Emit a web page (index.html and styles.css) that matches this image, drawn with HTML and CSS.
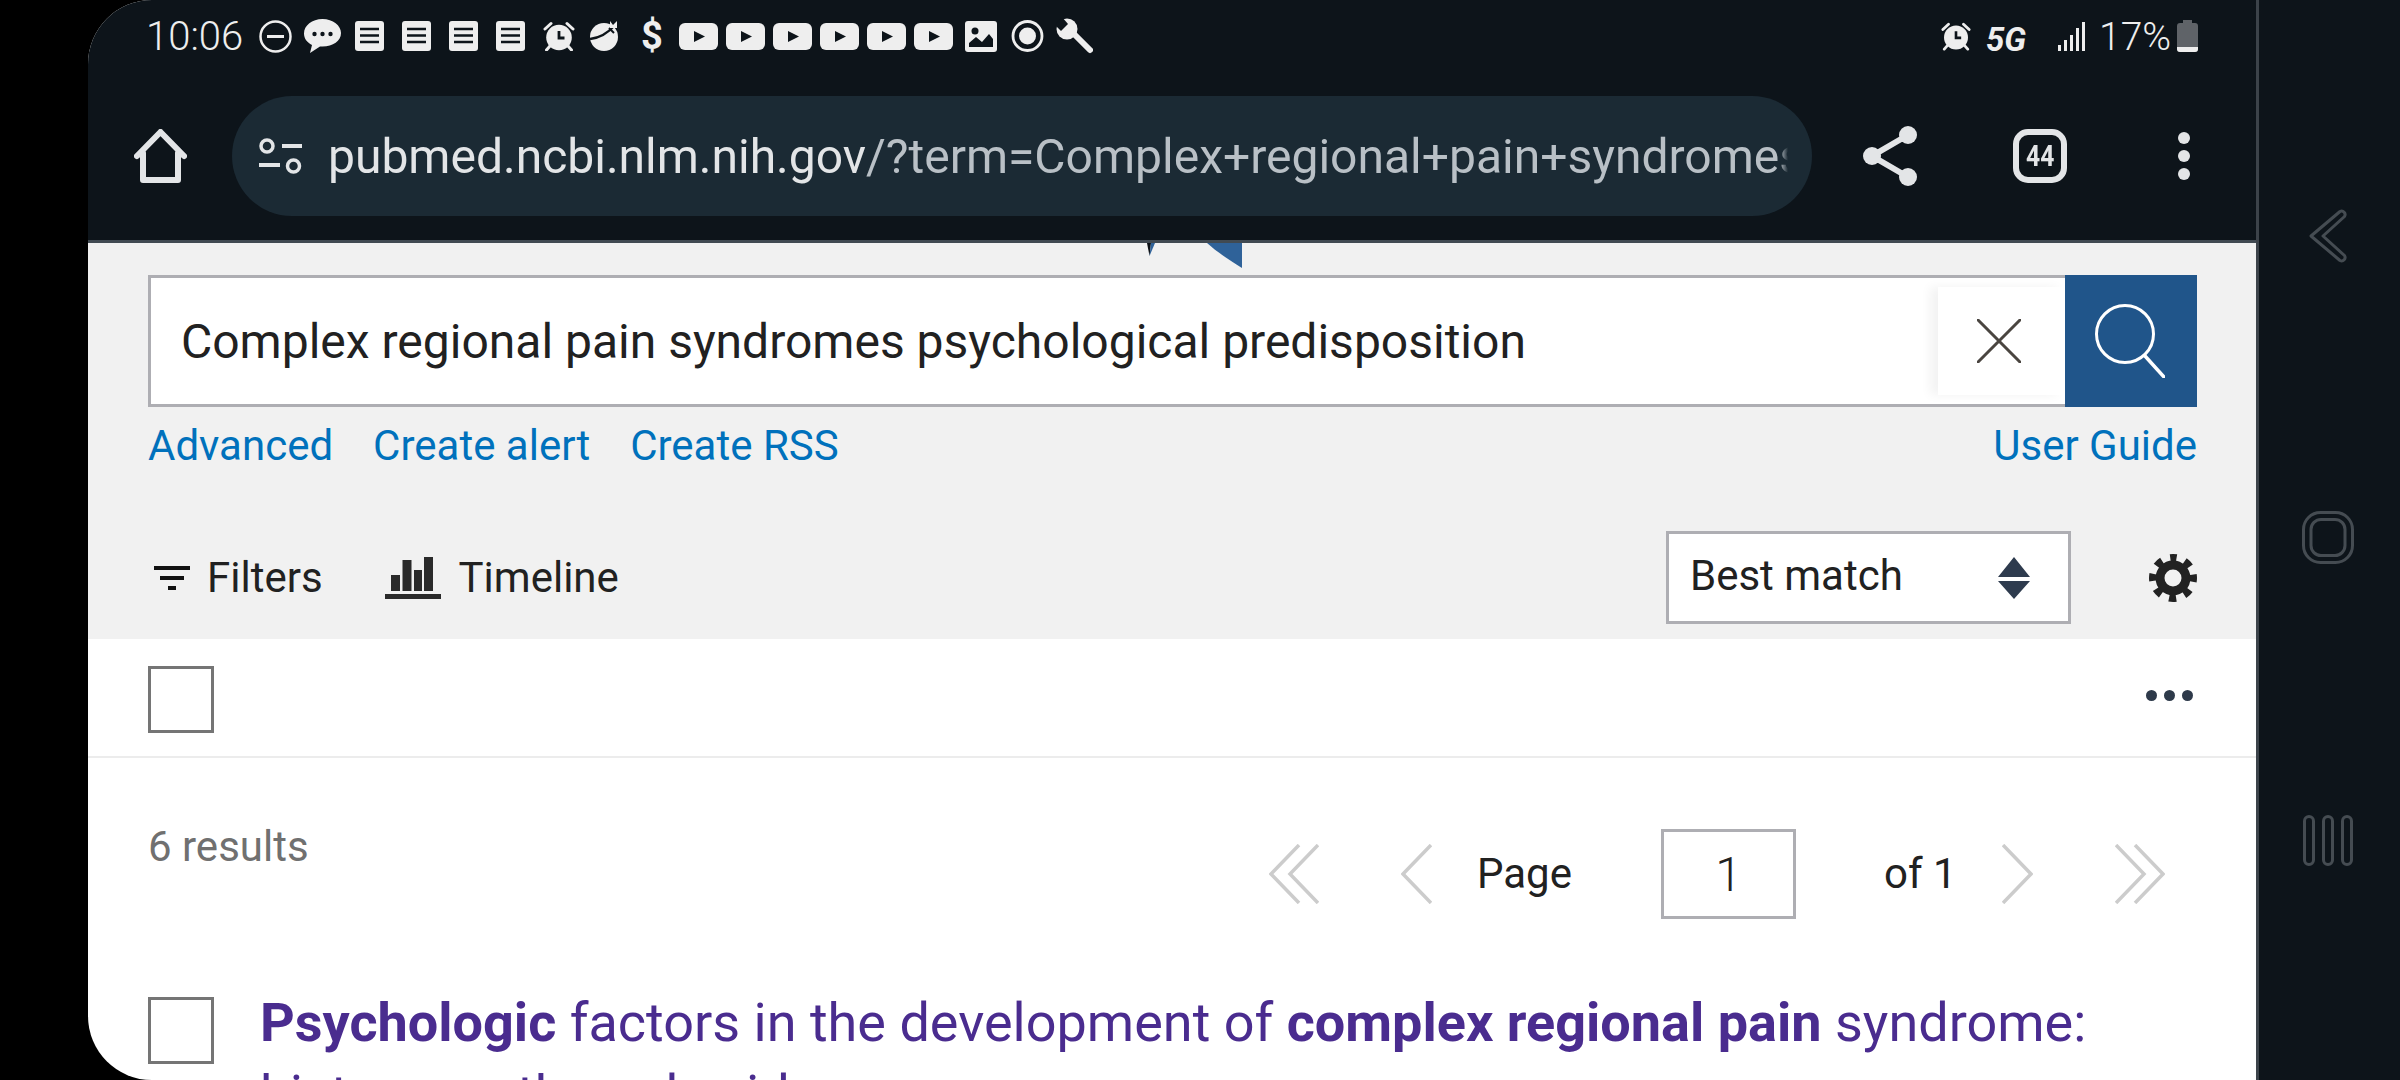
FILE: index.html
```html
<!DOCTYPE html>
<html lang="en">
<head>
<meta charset="utf-8">
<title>PubMed search results</title>
<link rel="stylesheet" href="styles.css">
</head>
<body>
<svg class="defs" width="0" height="0" aria-hidden="true">
  <symbol id="doc" viewBox="0 0 29 30"><rect width="29" height="30" rx="3" fill="#eee"/><path d="M5 8h19M5 14.500h19M5 21h19" stroke="#0d141a" stroke-width="2.500"/></symbol>
  <symbol id="play" viewBox="0 0 39 27"><rect width="39" height="27" rx="6" fill="#eee"/><path d="M15 8l11 5.500-11 5.500z" fill="#0d141a"/></symbol>
  <symbol id="alarm" viewBox="0 0 32 30"><circle cx="16" cy="16.500" r="12.800" fill="#eee"/><path d="M16 10v7h5.500" fill="none" stroke="#0d141a" stroke-width="2.800"/><path d="M2 8l6-5.500M24 2.500L30 8M7 25l-3.500 4M25 25l3.500 4" stroke="#eee" stroke-width="3" stroke-linecap="round"/></symbol>
</svg>
<div class="screen">
  <div class="phone">
    <header class="topbar">
      <div class="status">
        <span class="clock">10:06</span>
        <svg class="s-minus" viewBox="0 0 33 33"><circle cx="16.500" cy="16.500" r="15" fill="none" stroke="#eee" stroke-width="2.500"/><path d="M8 16.500h17" stroke="#eee" stroke-width="3"/></svg>
        <svg class="s-chat" viewBox="0 0 37 34"><path d="M18.500 0C8 0 0 6.500 0 14.500c0 5 3 9 8 11.500l-2 8 10-6.500h2.500C29 27.500 37 22 37 14 37 6.500 29 0 18.500 0z" fill="#eee"/><circle cx="10.500" cy="15" r="2.200" fill="#0d141a"/><circle cx="18.500" cy="15" r="2.200" fill="#0d141a"/><circle cx="26.500" cy="15" r="2.200" fill="#0d141a"/></svg>
        <svg class="s-doc s-doc-first"><use href="#doc"/></svg>
        <svg class="s-doc"><use href="#doc"/></svg>
        <svg class="s-doc"><use href="#doc"/></svg>
        <svg class="s-doc"><use href="#doc"/></svg>
        <svg class="s-alarm"><use href="#alarm"/></svg>
        <svg class="s-ball" viewBox="0 0 29 30"><circle cx="14" cy="16" r="14" fill="#eee"/><path d="M0 18C9 17 18 12 25 4" fill="none" stroke="#0d141a" stroke-width="2.500"/><path d="M19 7l5 5" stroke="#0d141a" stroke-width="2"/><path d="M20 0l3 4 4-4v7h-7z" fill="#eee"/></svg>
        <span class="s-dollar">$</span>
        <svg class="s-play s-play-first"><use href="#play"/></svg>
        <svg class="s-play"><use href="#play"/></svg>
        <svg class="s-play"><use href="#play"/></svg>
        <svg class="s-play"><use href="#play"/></svg>
        <svg class="s-play"><use href="#play"/></svg>
        <svg class="s-play"><use href="#play"/></svg>
        <svg class="s-image" viewBox="0 0 32 31"><rect width="32" height="31" rx="3" fill="#eee"/><circle cx="10" cy="10" r="3.500" fill="#0d141a"/><path d="M4 26v-4l7-6 6 5 7-8 4 5v8z" fill="#0d141a"/></svg>
        <svg class="s-target" viewBox="0 0 33 32"><circle cx="16.500" cy="16" r="14.500" fill="none" stroke="#eee" stroke-width="2.800"/><circle cx="16.500" cy="16" r="8.500" fill="#eee"/></svg>
        <svg class="s-wrench" viewBox="0 0 37 36"><path d="M14 12l20 20" stroke="#eee" stroke-width="6" stroke-linecap="round"/><circle cx="11" cy="11" r="10.500" fill="#eee"/><path d="M-1 7L5 13 12 6 6-1z" fill="#0d141a"/></svg>
        <div class="status-right">
          <svg class="s-alarm s-alarm-right"><use href="#alarm"/></svg>
          <span class="s-5g">5G</span>
          <svg class="s-bars" viewBox="0 0 27 29"><path d="M0 23h3v6H0zM6 18h3v11H6zM12 13h3v16h-3zM18 6h3v23h-3zM24 0h3v29h-3z" fill="#eee"/></svg>
          <span class="s-battery-text">17%</span>
          <svg class="s-battery" viewBox="0 0 21 32"><path d="M6 0h9v3h3a3 3 0 0 1 3 3v23a3 3 0 0 1-3 3H3a3 3 0 0 1-3-3V6a3 3 0 0 1 3-3h3z" fill="#5f6368"/><path d="M0 27h21v2a3 3 0 0 1-3 3H3a3 3 0 0 1-3-3z" fill="#eee"/></svg>
        </div>
      </div>
      <div class="toolbar">
        <svg class="t-home" viewBox="0 0 53 54"><path d="M3 27L26.500 3 50 27M9 24v27h35V24" fill="none" stroke="#e3e5e7" stroke-width="6" stroke-linejoin="round" stroke-linecap="round"/></svg>
        <div class="pill">
          <svg class="t-tune" viewBox="0 0 43 36"><circle cx="8" cy="8" r="6" fill="none" stroke="#e3e5e7" stroke-width="3.500"/><path d="M23 8h20M0 27h21" stroke="#e3e5e7" stroke-width="4"/><circle cx="34.500" cy="28" r="6" fill="none" stroke="#e3e5e7" stroke-width="3.500"/></svg>
          <div class="url"><span class="url-host">pubmed.ncbi.nlm.nih.gov</span>/?term=Complex+regional+pain+syndromes+psychological+predisposition</div>
        </div>
        <svg class="t-share" viewBox="0 0 54 60"><path d="M45 9L9 30l36 21" fill="none" stroke="#e3e5e7" stroke-width="6"/><circle cx="45" cy="9" r="9" fill="#e3e5e7"/><circle cx="9" cy="30" r="9" fill="#e3e5e7"/><circle cx="45" cy="51" r="9" fill="#e3e5e7"/></svg>
        <div class="t-tabs"><span class="t-tabs-count">44</span></div>
        <div class="t-menu"><i></i><i></i><i></i></div>
      </div>
    </header>

    <section class="searchpanel">
      <svg class="logo-scrap" viewBox="0 0 95 25"><path d="M0 0h4L2.500 13z" fill="#0b0f14"/><path d="M4 0h4L2.500 13z" fill="#2f6299"/><path d="M60 0h35v25C82 17 70 9 60 0z" fill="#2f6299"/></svg>
      <div class="search">
        <div class="search-input">
          <span class="search-term">Complex regional pain syndromes psychological predisposition</span>
          <div class="search-clear">
            <svg class="clear-x" viewBox="0 0 44 44"><path d="M1 1l42 42M43 1L1 43" stroke="#4a4540" stroke-width="3" stroke-linecap="round"/></svg>
          </div>
        </div>
        <button class="search-go" type="button" aria-label="Search">
          <svg class="go-icon" viewBox="0 0 70 74"><circle cx="30" cy="30" r="28.500" fill="none" stroke="#fff" stroke-width="3"/><path d="M50 52l19 21" stroke="#fff" stroke-width="3.500" stroke-linecap="round"/></svg>
        </button>
      </div>
      <nav class="links">
        <a class="link">Advanced</a>
        <a class="link">Create alert</a>
        <a class="link">Create RSS</a>
        <a class="link link-end">User Guide</a>
      </nav>
      <div class="tools">
        <svg class="ico-filter" viewBox="0 0 36 24"><path d="M0 0h36v4H0zM6 10h24v4H6zM14 20h8v4h-8z" fill="#111"/></svg>
        <span class="tool-label label-filters">Filters</span>
        <svg class="ico-timeline" viewBox="0 0 56 42"><path d="M6 18h9v16H6zM17.500 3h9v31h-9zM29 13h8v21h-8zM39 0h9v34h-9z" fill="#2a2a2a"/><path d="M0 37h56v5H0z" fill="#2a2a2a"/></svg>
        <span class="tool-label label-timeline">Timeline</span>
        <div class="sort">
          <span class="sort-text">Best match</span>
          <svg class="sort-arrows" viewBox="0 0 32 42"><path d="M16 0L32 20H0zM0 24h32L16 42z" fill="#2e3b4e"/></svg>
        </div>
        <svg class="ico-gear" viewBox="0 0 48 48"><circle cx="24" cy="24" r="13" fill="none" stroke="#222" stroke-width="9"/><circle cx="24" cy="24" r="20" fill="none" stroke="#222" stroke-width="8" stroke-dasharray="7.200 8.508" stroke-dashoffset="3.600" transform="rotate(-90 24 24)"/></svg>
      </div>
    </section>

    <div class="actions">
      <span class="check"></span>
      <div class="more"><i></i><i></i><i></i></div>
    </div>

    <div class="results-head">
      <span class="count">6 results</span>
      <div class="pager">
        <svg class="chev chev-double" viewBox="0 0 50 60"><path d="M30 1L2 30l28 29M49 1L21 30l28 29" fill="none" stroke="#ccc" stroke-width="3.500"/></svg>
        <svg class="chev chev-prev" viewBox="0 0 31 60"><path d="M30 1L2 30l28 29" fill="none" stroke="#ccc" stroke-width="3.500"/></svg>
        <span class="pager-page">Page</span>
        <span class="pager-input">1</span>
        <span class="pager-of">of 1</span>
        <svg class="chev chev-next" viewBox="0 0 31 60"><path d="M1 1l28 29L1 59" fill="none" stroke="#ccc" stroke-width="3.500"/></svg>
        <svg class="chev chev-last" viewBox="0 0 50 60"><path d="M1 1l28 29L1 59M20 1l28 29-28 29" fill="none" stroke="#ccc" stroke-width="3.500"/></svg>
      </div>
    </div>

    <article class="result">
      <span class="check check-result"></span>
      <h2 class="result-title"><b>Psychologic</b> factors in the development of <b>complex regional pain</b> syndrome: history, myth, and evidence</h2>
    </article>
  </div>

  <aside class="softkeys">
    <svg class="key key-back" viewBox="0 0 52 54"><path d="M38 2.500a3.500 3.500 0 0 1 4.500 5L21 27l21.500 19.500a3.500 3.500 0 0 1-4.500 5L9 27z" fill="none" stroke="#454c52" stroke-width="3" stroke-linejoin="round"/></svg>
    <svg class="key key-home" viewBox="0 0 52 53"><rect x="1.500" y="1.500" width="49" height="50" rx="17" fill="none" stroke="#454c52" stroke-width="3"/><rect x="9" y="8.500" width="34" height="36" rx="10" fill="none" stroke="#454c52" stroke-width="3"/></svg>
    <svg class="key key-recent" viewBox="0 0 52 51"><rect x="2.500" y="1.500" width="9" height="48" rx="4.500" fill="none" stroke="#454c52" stroke-width="3"/><rect x="21.500" y="1.500" width="9" height="48" rx="4.500" fill="none" stroke="#454c52" stroke-width="3"/><rect x="40.500" y="1.500" width="9" height="48" rx="4.500" fill="none" stroke="#454c52" stroke-width="3"/></svg>
  </aside>
</div>
</body>
</html>
```

FILE: styles.css
```css
* { box-sizing: border-box; }
html, body { margin: 0; padding: 0; background: #000; }
body { font-family: Roboto, "Liberation Sans", sans-serif; color: #212121; }
svg { display: block; flex: none; }
.defs { position: absolute; }

.screen { display: flex; width: 2400px; height: 1080px; overflow: hidden; background: #000; }
.phone { display: flex; flex-direction: column; width: 2168px; height: 1080px; margin-left: 88px; background: #fff; border-radius: 64px 0 0 64px; overflow: hidden; }

/* top bar */
.topbar { flex: none; height: 243px; background: #0d141a; border-bottom: 3px solid #414a52; }
.status { display: flex; align-items: center; height: 72px; padding: 0 58px 0 58px; color: #eee; }
.clock { width: 94px; padding-top: 2px; font-size: 40px; font-weight: 300; line-height: 72px; white-space: nowrap; }
.s-minus { width: 33px; height: 33px; margin-left: 19px; }
.s-chat { width: 37px; height: 34px; margin-left: 12px; }
.s-doc { width: 29px; height: 30px; margin-left: 18px; }
.s-doc-first { margin-left: 14px; }
.s-alarm { width: 32px; height: 30px; margin-left: 18px; }
.s-ball { width: 29px; height: 30px; margin-left: 15px; }
.s-dollar { width: 21px; margin-left: 22px; font-size: 38px; font-weight: 700; text-align: center; line-height: 72px; }
.s-play { width: 39px; height: 27px; margin-left: 8px; }
.s-play-first { margin-left: 17px; }
.s-image { width: 32px; height: 31px; margin-left: 12px; }
.s-target { width: 33px; height: 32px; margin-left: 14px; }
.s-wrench { width: 37px; height: 36px; margin-left: 12px; }
.status-right { display: flex; align-items: center; margin-left: auto; }
.s-alarm-right { width: 30px; margin-left: 0; }
.s-5g { width: 44px; margin-left: 15px; padding-top: 6px; font-size: 33px; font-weight: 700; font-style: italic; white-space: nowrap; }
.s-bars { width: 27px; height: 29px; margin-left: 28px; }
.s-battery-text { width: 69px; margin-left: 14px; padding-top: 1px; font-size: 39px; font-weight: 300; line-height: 72px; white-space: nowrap; }
.s-battery { width: 21px; height: 32px; margin-left: 9px; }

.toolbar { display: flex; align-items: center; height: 120px; margin-top: 24px; padding-left: 46px; }
.t-home { width: 53px; height: 54px; }
.pill { display: flex; align-items: center; width: 1580px; height: 120px; margin-left: 45px; padding: 0 24px 0 27px; background: #1b2a34; border-radius: 60px; }
.t-tune { width: 43px; height: 36px; }
.url { flex: 1; margin-left: 26px; padding-top: 2px; overflow: hidden; white-space: nowrap; font-size: 48px; line-height: 60px; color: #b9c0c6; -webkit-mask-image: linear-gradient(to right, #000 calc(100% - 8px), transparent); mask-image: linear-gradient(to right, #000 calc(100% - 8px), transparent); }
.url-host { color: #e3e5e7; }
.t-share { width: 54px; height: 60px; margin-left: 51px; }
.t-tabs { display: flex; align-items: center; justify-content: center; width: 54px; height: 54px; margin-left: 96px; border: 6px solid #e3e5e7; border-radius: 15px; color: #e3e5e7; font-weight: 700; }
.t-tabs-count { font-size: 30px; line-height: 30px; transform: scaleX(.82); }
.t-menu { display: flex; flex-direction: column; gap: 6px; width: 12px; margin-left: 111px; }
.t-menu i { display: block; width: 12px; height: 12px; border-radius: 50%; background: #e3e5e7; }

/* search panel */
.searchpanel { position: relative; flex: none; height: 396px; padding: 32px 59px 0 60px; background: #f1f1f1; }
.logo-scrap { position: absolute; top: 0; left: 1059px; width: 95px; height: 25px; }
.search { display: flex; height: 132px; }
.search-input { display: flex; align-items: center; justify-content: space-between; flex: 1; padding-left: 30px; background: #fff; border: 3px solid #aeaeb3; border-right: 0; }
.search-term { font-size: 48px; white-space: nowrap; }
.search-clear { display: flex; align-items: center; justify-content: center; width: 127px; height: 108px; padding-right: 6px; background: #fff; box-shadow: -8px 0 10px rgba(0, 0, 0, .05); }
.clear-x { width: 44px; height: 44px; }
.search-go { display: flex; align-items: flex-start; justify-content: flex-start; width: 132px; height: 132px; padding: 29px 0 0 30px; background: #20558a; border: 0; }
.go-icon { width: 70px; height: 74px; }

.links { display: flex; gap: 40px; height: 76px; align-items: center; }
.link { font-size: 42px; color: #0071bc; white-space: nowrap; }
.link-end { margin-left: auto; }

.tools { display: flex; align-items: center; height: 93px; margin-top: 48px; }
.ico-filter { width: 36px; height: 24px; margin-left: 6px; }
.tool-label { font-size: 42px; white-space: nowrap; }
.label-filters { margin-left: 17px; }
.ico-timeline { width: 56px; height: 42px; margin-left: 62px; }
.label-timeline { margin-left: 18px; }
.sort { display: flex; align-items: center; width: 405px; height: 93px; margin-left: auto; padding: 0 38px 4px 21px; background: #fff; border: 3px solid #aeaeb3; }
.sort-text { font-size: 42px; white-space: nowrap; }
.sort-arrows { width: 32px; height: 42px; margin-left: auto; margin-top: 4px; }
.ico-gear { width: 48px; height: 48px; margin-left: 78px; }

/* list head */
.actions { display: flex; align-items: center; justify-content: space-between; flex: none; height: 119px; padding: 3px 63px 0 60px; border-bottom: 2px solid #ececec; }
.check { display: block; flex: none; width: 66px; height: 67px; background: #fff; border: 3px solid #757575; }
.more { display: flex; gap: 7px; margin-bottom: 7px; }
.more i { display: block; width: 11px; height: 11px; border-radius: 50%; background: #2e3a4a; }

.results-head { display: flex; flex: none; height: 90px; margin-top: 71px; padding: 0 91px 0 60px; }
.count { font-size: 42px; line-height: 33px; color: #707070; white-space: nowrap; padding-top: 1px; }
.pager { display: flex; align-items: center; height: 90px; margin-left: auto; font-size: 42px; }
.chev { height: 60px; }
.chev-double { width: 50px; }
.chev-prev { width: 31px; margin-left: 82px; }
.pager-page { margin-left: 45px; margin-bottom: 2px; width: 94px; white-space: nowrap; }
.pager-input { display: flex; align-items: center; justify-content: center; width: 135px; height: 90px; margin-left: 90px; background: #fff; border: 3px solid #aeaeb3; font-size: 48px; font-weight: 300; }
.pager-of { width: 69px; margin-left: 88px; margin-bottom: 2px; white-space: nowrap; }
.chev-next { width: 31px; margin-left: 49px; }
.chev-last { width: 50px; margin-left: 82px; }

.result { display: flex; flex: none; margin-top: 68px; padding-left: 60px; }
.check-result { margin-top: 10px; }
.result-title { width: 1880px; margin: 0 0 0 46px; font-size: 54px; font-weight: 400; line-height: 72px; color: #4a2c8f; }
.result-title b { font-weight: 700; }

/* device keys */
.softkeys { display: flex; flex-direction: column; flex: 1; padding: 209px 0 0 43px; background: #0d141a; border-left: 3px solid #3c434a; }
.key { width: 52px; }
.key-back { height: 54px; }
.key-home { height: 53px; margin-top: 248px; }
.key-recent { height: 51px; margin-top: 251px; }
```
